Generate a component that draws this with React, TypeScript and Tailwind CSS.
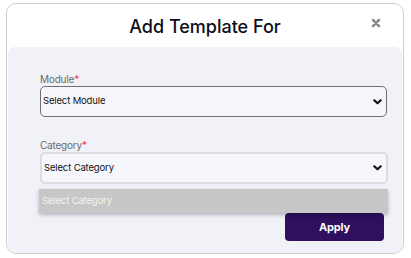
import React from 'react';

function Chevron() {
  return (
    <svg width="9" height="6" viewBox="0 0 9 6" className="shrink-0">
      <path d="M1.3 1.3 L4.5 4.3 L7.7 1.3" fill="none" stroke="#111" strokeWidth="2.2" strokeLinecap="round" strokeLinejoin="round" />
    </svg>
  );
}

function Field({ label, value, focused }: { label: string; value: string; focused?: boolean }) {
  return (
    <div className="flex flex-col">
      <label className="text-[10px] leading-[14px] tracking-[-0.2px] text-[#6a6a6a]">
        {label}
        <span className="text-[#e8384f]">*</span>
      </label>
      <div
        className={
          focused
            ? 'flex items-center justify-between h-[32px] w-[348px] pl-[2px] pr-[4px] rounded-[5px] bg-[#f6f7fc] border-2 border-[#dcdcdc]'
            : 'flex items-center justify-between h-[31px] w-[347px] pl-[2px] pr-[4px] rounded-[5px] bg-[#f5f6fb] border border-[#6f6f6f]'
        }
      >
        <span className="text-[9.5px] tracking-[-0.15px] text-[#111]">{value}</span>
        <Chevron />
      </div>
    </div>
  );
}

export default function App() {
  return (
    <div className="w-[411px] h-[258px] bg-white pt-[3px] px-[6px]" style={{ fontFamily: 'Inter, "Noto Sans", sans-serif' }}>
      <div className="h-[251px] w-[398px] border border-[#cfcfcf] rounded-[10px] flex flex-col overflow-hidden">
        {/* header */}
        <div className="relative h-[43px] shrink-0 flex justify-center pt-[11px]">
          <h1 className="text-[18px] leading-[24px] font-medium text-[#0d0d1a]">Add Template For</h1>
          <button className="absolute right-[22px] top-[14px]">
            <svg width="10" height="10" viewBox="0 0 10 10">
              <path d="M2 2 L8 8 M8 2 L2 8" stroke="#8a8a8a" strokeWidth="2.5" strokeLinecap="round" />
            </svg>
          </button>
        </div>

        {/* body */}
        <div className="relative flex-1 bg-[#f1f2f8] rounded-t-[7px] mx-[1px] pl-[32px] pt-[25px]">
          <Field label="Module" value="Select Module" />
          <div className="mt-[21px]">
            <Field label="Category" value="Select Category" focused />
          </div>
          <div className="flex justify-end w-[344px] mt-[29px]">
            <button className="w-[99px] h-[28px] rounded-[4px] bg-[#2f0f5e] text-white text-[11px] font-bold tracking-[-0.2px]">Apply</button>
          </div>

          {/* open dropdown menu */}
          <div className="absolute left-[31px] top-[142px] w-[349px] h-[24px] bg-[#c7c7c7] flex items-center pl-[3px] shadow-[0_2px_4px_rgba(0,0,0,0.25)]">
            <span className="text-[9.5px] tracking-[-0.15px] text-[#f4f4f4]">Select Category</span>
          </div>
        </div>
      </div>
    </div>
  );
}
